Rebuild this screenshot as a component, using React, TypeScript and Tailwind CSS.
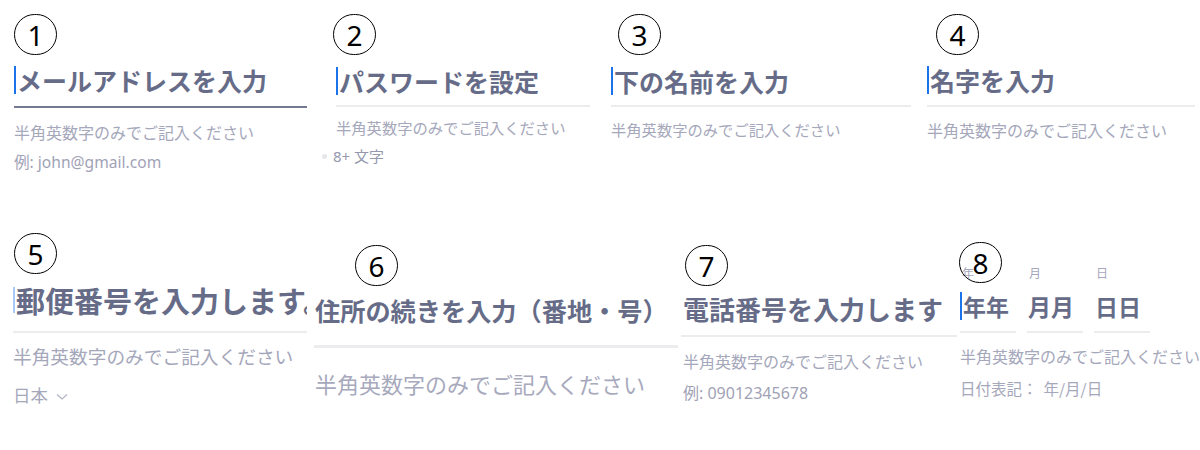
import React from 'react';

// Circled step number drawn with CSS, digit kept as text
const Step = ({ n, className = '' }: { n: number; className?: string }) => (
  <div
    className={`flex h-[41px] w-[43px] shrink-0 items-center justify-center rounded-full border-[1.5px] border-black font-['Noto_Sans',sans-serif] text-[28px] leading-none text-black ${className}`}
  >
    <span className="mt-[1px]">{n}</span>
  </div>
);

const Caret = ({ light = false, h = 'h-[28px]' }: { light?: boolean; h?: string }) => (
  <span className={`mr-[1px] inline-block w-[2px] shrink-0 ${h} ${light ? 'bg-[#a9caf2]' : 'bg-[#1a73e8]'}`} />
);

const helper = '半角英数字のみでご記入ください';

export default function App() {
  return (
    <div className="h-[450px] w-[1200px] overflow-hidden bg-white font-['Noto_Sans_CJK_JP',sans-serif] text-[#666c88]">
      {/* Row 1 */}
      <div className="flex h-[220px] items-start">
        {/* 1: email */}
        <div className="ml-[14px] flex w-[293px] shrink-0 flex-col">
          <Step n={1} className="mt-[14px]" />
          <div className="mt-[11px] flex h-[28px] items-center text-[25px] font-bold leading-[28px]">
            <Caret />
            <span className="whitespace-nowrap">メールアドレスを入力</span>
          </div>
          <div className="mt-[12px] h-[2px] bg-[#75798f]" />
          <div className="mt-[14px] whitespace-nowrap text-[16px] leading-[20px] text-[#a5a7bb]">{helper}</div>
          <div className="mt-[10px] font-['Noto_Sans','Noto_Sans_CJK_JP',sans-serif] text-[15.6px] leading-[20px] text-[#9fa2b6]">
            例: john@gmail.com
          </div>
        </div>

        {/* 2: password */}
        <div className="ml-[26px] flex w-[257px] shrink-0 flex-col">
          <Step n={2} className="mt-[14px]" />
          <div className="ml-[3px] flex flex-col">
            <div className="mt-[12px] flex h-[28px] items-center text-[25px] font-bold leading-[28px]">
              <Caret />
              <span className="whitespace-nowrap">パスワードを設定</span>
            </div>
            <div className="mt-[10px] h-[2px] bg-[#ececee]" />
            <div className="mt-[10px] whitespace-nowrap text-[15.3px] leading-[20px] text-[#a5a7bb]">{helper}</div>
            <div className="-ml-[14px] mt-[9px] flex items-center font-['Noto_Sans','Noto_Sans_CJK_JP',sans-serif] text-[15px] leading-[20px] text-[#9598ae]">
              <span className="mr-[6px] h-[5px] w-[5px] rounded-full bg-[#e6e6ea]" />
              8+ 文字
            </div>
          </div>
        </div>

        {/* 3: first name */}
        <div className="ml-[21px] flex w-[300px] shrink-0 flex-col">
          <Step n={3} className="ml-[7px] mt-[14px]" />
          <div className="mt-[12px] flex h-[28px] items-center text-[25px] font-bold leading-[28px]">
            <Caret />
            <span className="whitespace-nowrap">下の名前を入力</span>
          </div>
          <div className="mt-[10px] h-[2px] bg-[#ececee]" />
          <div className="mt-[12px] whitespace-nowrap text-[15.3px] leading-[20px] text-[#a5a7bb]">{helper}</div>
        </div>

        {/* 4: last name */}
        <div className="ml-[16px] flex w-[268px] shrink-0 flex-col">
          <Step n={4} className="ml-[9px] mt-[14px]" />
          <div className="mt-[11px] flex h-[28px] items-center text-[25px] font-bold leading-[28px]">
            <Caret />
            <span className="whitespace-nowrap">名字を入力</span>
          </div>
          <div className="mt-[11px] h-[2px] bg-[#ececee]" />
          <div className="mt-[13px] whitespace-nowrap text-[16px] leading-[20px] text-[#a5a7bb]">{helper}</div>
        </div>
      </div>

      {/* Row 2 */}
      <div className="flex h-[230px] items-start">
        {/* 5: postal code (placeholder overflows the field) */}
        <div className="ml-[13px] flex w-[294px] shrink-0 flex-col">
          <Step n={5} className="ml-[1px] mt-[13px]" />
          <div className="mt-[10px] flex h-[32px] items-center overflow-hidden text-[29px] font-bold leading-[32px]">
            <Caret light h="h-[26px]" />
            <span className="whitespace-nowrap">郵便番号を入力します。</span>
          </div>
          <div className="mt-[15px] h-[2px] bg-[#ececee]" />
          <div className="mt-[11px] whitespace-nowrap text-[18.7px] leading-[24px] text-[#a5a7bb]">{helper}</div>
          <div className="mt-[15px] flex items-center text-[17.5px] leading-[24px] text-[#a5a7bb]">
            日本
            <svg className="ml-[8px] mt-[4px]" width="12" height="8" viewBox="0 0 12 8" fill="none">
              <polyline points="1,1.5 6,6 11,1.5" stroke="#b4b6c6" strokeWidth="1.3" />
            </svg>
          </div>
        </div>

        {/* 6: address */}
        <div className="ml-[7px] flex w-[364px] shrink-0 flex-col">
          <Step n={6} className="ml-[41px] mt-[25px]" />
          <div className="ml-[1px] mt-[10px] flex h-[28px] items-center text-[25.2px] font-bold leading-[28px]">
            <span className="whitespace-nowrap">住所の続きを入力（番地・号）</span>
          </div>
          <div className="mt-[21px] h-[3px] bg-[#ececee]" />
          <div className="ml-[1px] mt-[21px] whitespace-nowrap text-[22px] leading-[28px] text-[#a7a9bd]">{helper}</div>
        </div>

        {/* 7: phone */}
        <div className="ml-[3px] flex w-[276px] shrink-0 flex-col">
          <Step n={7} className="ml-[4px] mt-[25px]" />
          <div className="ml-[2px] mt-[9px] flex h-[28px] items-center text-[26px] font-bold leading-[28px]">
            <span className="whitespace-nowrap">電話番号を入力します</span>
          </div>
          <div className="mt-[12px] h-[2px] bg-[#ececee]" />
          <div className="ml-[2px] mt-[14px] whitespace-nowrap text-[16px] leading-[20px] text-[#a5a7bb]">{helper}</div>
          <div className="ml-[2px] mt-[12px] font-['Noto_Sans','Noto_Sans_CJK_JP',sans-serif] text-[16px] leading-[20px] text-[#9fa2b6]">
            例: 09012345678
          </div>
        </div>

        {/* 8: birthday */}
        <div className="ml-[3px] flex w-[260px] shrink-0 flex-col">
          <Step n={8} className="relative z-10 ml-[-1px] mt-[22px]" />
          <div className="-mt-[18px] flex gap-[11px]">
            {[
              ['年', '年年', true],
              ['月', '月月', false],
              ['日', '日日', false],
            ].map(([label, value, active]) => (
              <div key={label as string} className="flex w-[56px] flex-col">
                <div className="ml-[2px] text-[12px] leading-[16px] text-[#a5a7bb]">{label}</div>
                <div className="mt-[11px] flex h-[28px] items-center text-[23px] font-bold leading-[28px]">
                  {active ? <Caret /> : <span className="w-[1px]" />}
                  <span className="whitespace-nowrap">{value}</span>
                </div>
                <div className="mt-[11px] h-[2px] bg-[#ececee]" />
              </div>
            ))}
          </div>
          <div className="mt-[13px] whitespace-nowrap text-[16px] leading-[20px] text-[#a5a7bb]">{helper}</div>
          <div className="mt-[12px] whitespace-nowrap text-[15.5px] leading-[20px] text-[#a5a7bb]">
            日付表記：<span className="ml-[6px]">年/月/日</span>
          </div>
        </div>
      </div>
    </div>
  );
}
